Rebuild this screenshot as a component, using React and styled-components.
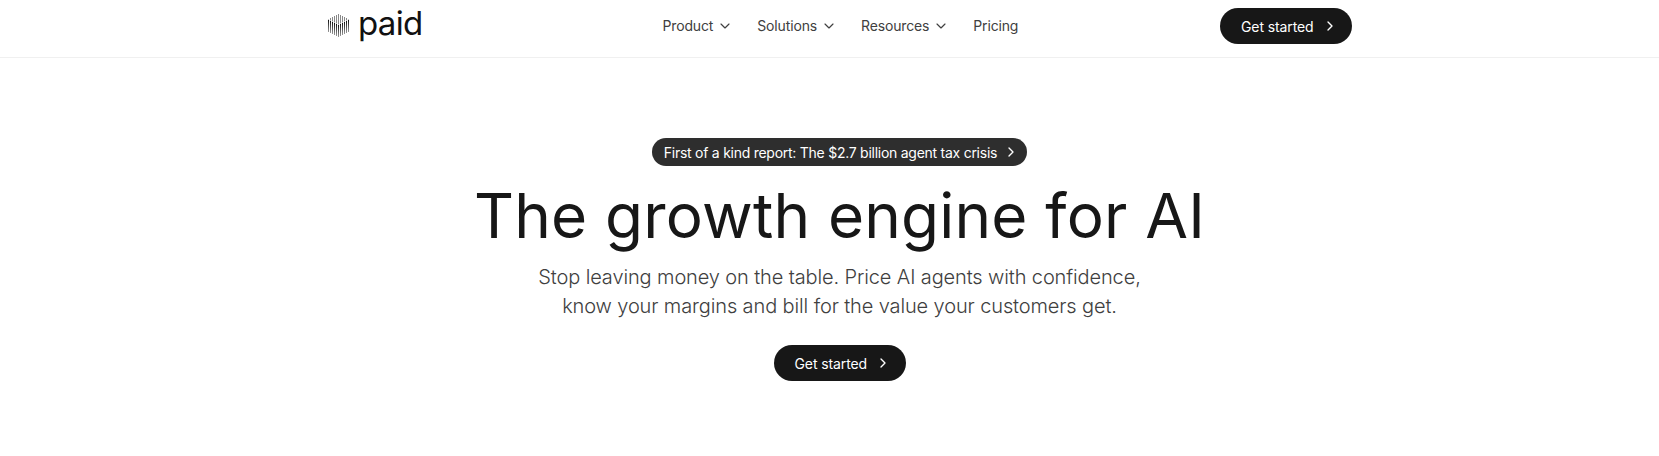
import styled, { createGlobalStyle } from "styled-components";
import { ChevronDown, ChevronRight } from "lucide-react";

const GlobalStyle = createGlobalStyle`
	html, body {
		margin: 0;
		padding: 0;
		background: #fff;
		font-family: Inter, "Liberation Sans", sans-serif;
	}
`;

const Header = styled.header`
	height: 58px;
	box-sizing: border-box;
	border-bottom: 1px solid #f0f0f0;
	padding: 8px 307px 0 327px;
	display: flex;
	justify-content: space-between;
	align-items: flex-start;
`;

const Brand = styled.a`
	display: flex;
	align-items: center;
	gap: 8px;
	height: 36px;
	color: #111;
	width: 335.5px;

	svg {
		margin-left: 1px;
	}
`;

const BrandName = styled.span`
	font-size: 33px;
	line-height: 36px;
	font-weight: 400;
	letter-spacing: -0.7px;
	margin-top: -7px;
`;

const Nav = styled.nav`
	display: flex;
	align-items: center;
	gap: 24px;
	height: 35px;
	margin-right: auto;
`;

const NavItem = styled.a`
	display: flex;
	align-items: center;
	gap: 4px;
	font-size: 14px;
	letter-spacing: -0.15px;
	color: #404040;
`;

const CtaButton = styled.a`
	display: flex;
	align-items: center;
	gap: 8px;
	width: 132px;
	height: 36px;
	box-sizing: border-box;
	padding-left: 21px;
	border-radius: 18px;
	background: #171717;
	color: #fff;
	font-size: 14px;
	letter-spacing: -0.1px;
`;

const Hero = styled.main`
	display: flex;
	flex-direction: column;
	align-items: center;
	padding: 80px 0 0 20px;
`;

const Announcement = styled.a`
	display: flex;
	align-items: center;
	gap: 6px;
	height: 28px;
	padding: 0 8px 0 12px;
	border-radius: 14px;
	background: #2e2e2e;
	color: #fff;
	font-size: 14px;
	letter-spacing: -0.26px;
`;

const Title = styled.h1`
	margin: 14px 0 0;
	font-size: 62px;
	line-height: 72px;
	font-weight: 400;
	letter-spacing: 0.2px;
	color: #171717;
`;

const Subtitle = styled.p`
	margin: 11px 0 24px;
	font-size: 20px;
	line-height: 29px;
	font-weight: 300;
	letter-spacing: -0.12px;
	text-align: center;
	color: #404040;
`;

// upright bars that form a small cube: light lid above the seam, dark body below
function LogoMark() {
	const bars = [0, 1, 2, 3, 4, 5, 6, 7, 8, 9, 10];
	return (
		<svg width="22" height="24" viewBox="0 0 22 24">
			<defs>
				<linearGradient id="body" x1="0" y1="0" x2="0" y2="1">
					<stop offset="0" stopColor="#111" />
					<stop offset="1" stopColor="#999" />
				</linearGradient>
			</defs>
			{bars.map((i) => {
				const off = Math.abs(i - 5);
				const top = off;
				const seam = 11 - off;
				const bottom = 23 - off;
				return (
					<g key={i}>
						<rect x={i * 2} y={top} width="1" height={seam - top - 0.5} fill="#888" />
						<rect x={i * 2} y={seam} width="1" height={bottom - seam} fill="url(#body)" />
					</g>
				);
			})}
		</svg>
	);
}

function NavLink({ label, menu }) {
	return (
		<NavItem>
			{label}
			{menu && <ChevronDown size={16} strokeWidth={1.75} />}
		</NavItem>
	);
}

export default function App() {
	return (
		<>
			<GlobalStyle />
			<Header>
				<Brand>
					<LogoMark />
					<BrandName>paid</BrandName>
				</Brand>
				<Nav>
					<NavLink label="Product" menu />
					<NavLink label="Solutions" menu />
					<NavLink label="Resources" menu />
					<NavLink label="Pricing" />
				</Nav>
				<CtaButton>
					Get started
					<ChevronRight size={16} strokeWidth={2} />
				</CtaButton>
			</Header>
			<Hero>
				<Announcement>
					First of a kind report: The $2.7 billion agent tax crisis
					<ChevronRight size={16} strokeWidth={2} />
				</Announcement>
				<Title>The growth engine for AI</Title>
				<Subtitle>
					Stop leaving money on the table. Price AI agents with confidence,
					<br />
					know your margins and bill for the value your customers get.
				</Subtitle>
				<CtaButton>
					Get started
					<ChevronRight size={16} strokeWidth={2} />
				</CtaButton>
			</Hero>
		</>
	);
}
